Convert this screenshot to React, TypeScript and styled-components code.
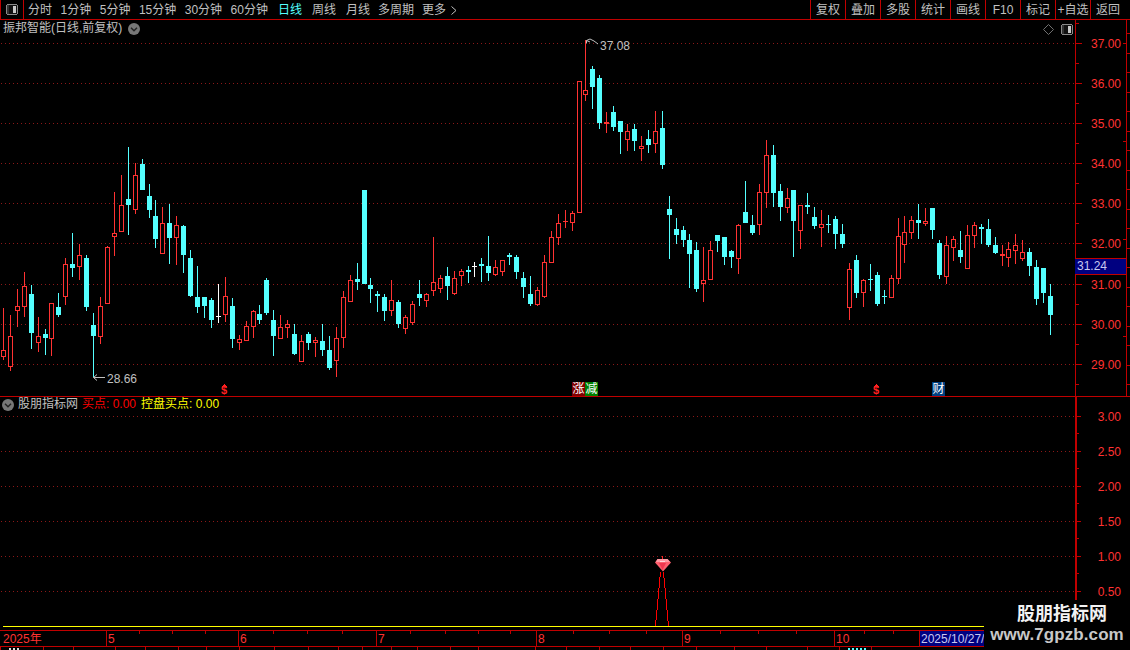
import React from "react";
import styled, { createGlobalStyle } from "styled-components";

const RED = "#c00000";
const LABEL = "#ff3232";
const CYAN = "#54ffff";
const FONT = `"Liberation Sans", "Noto Sans CJK SC", sans-serif`;

const Global = createGlobalStyle`
  html, body { margin: 0; padding: 0; background: #000; }
`;

const Page = styled.div`
  position: relative;
  width: 1130px;
  height: 650px;
  background: #000;
  overflow: hidden;
  display: flex;
  flex-direction: column;
  font: 12px/15px ${FONT};
  color: #c0c0c0;
`;

const Toolbar = styled.div`
  flex: none;
  height: 19px;
  border-bottom: 1px solid ${RED};
  display: flex;
  line-height: 19px;
`;
const IconCell = styled.div`
  width: 22px;
  border-left: 1px solid ${RED};
  border-right: 1px solid ${RED};
  display: flex;
  align-items: center;
  justify-content: center;
`;
const Periods = styled.div`
  display: flex;
  align-items: flex-start;
  padding: 1px 0 0 4px;
`;
const PeriodGroup = styled.div<{ $gap: number; $lead: number }>`
  display: flex;
  gap: ${(p) => p.$gap}px;
  margin-left: ${(p) => p.$lead}px;
`;
const PeriodTab = styled.span<{ $active?: boolean }>`
  display: flex;
  align-items: center;
  gap: 5px;
  white-space: nowrap;
  color: ${(p) => (p.$active ? CYAN : "#c0c0c0")};
`;
const Actions = styled.div`
  margin-left: auto;
  display: flex;
  padding-right: 5px;
`;
const ActionButton = styled.span<{ $last?: boolean }>`
  width: 34px;
  padding-top: 1px;
  border-left: 1px solid ${RED};
  text-align: center;
  white-space: nowrap;
`;

const Pane = styled.div<{ $height: number; $rule?: boolean }>`
  flex: none;
  height: ${(p) => p.$height}px;
  display: flex;
  box-sizing: border-box;
  border-bottom: ${(p) => (p.$rule ? `1px solid ${RED}` : "none")};
`;
const Plot = styled.div`
  position: relative;
  width: 1075px;
  flex: none;
`;
const AxisColumn = styled.div`
  position: relative;
  flex: 1;
`;
const Drawing = styled.svg`
  display: block;
  flex: none;
  font-family: ${FONT};
  font-size: 12px;
`;
const PaneHeader = styled.div<{ $left: number; $top: number }>`
  position: absolute;
  left: ${(p) => p.$left}px;
  top: ${(p) => p.$top}px;
  display: flex;
  align-items: center;
  white-space: nowrap;
`;
const Legend = styled.span<{ $color: string; $lead: number }>`
  display: flex;
  color: ${(p) => p.$color};
  margin-left: ${(p) => p.$lead}px;
`;
const CornerTools = styled.div`
  position: absolute;
  right: 2px;
  top: 4px;
  display: flex;
  align-items: center;
  gap: 7px;
`;
const Badge = styled.span<{ $bg: string; $left: number }>`
  position: absolute;
  left: ${(p) => p.$left}px;
  top: 362px;
  width: 13px;
  height: 14px;
  line-height: 14px;
  text-align: center;
  color: #fff;
  background: ${(p) => p.$bg};
`;
const PriceTag = styled.div`
  position: absolute;
  left: 0;
  top: 238px;
  width: 51px;
  height: 17px;
  box-sizing: border-box;
  border-top: 1px solid ${RED};
  border-bottom: 1px solid ${RED};
  background: #000080;
  color: #c8c8f0;
  line-height: 15px;
  padding-left: 2px;
`;
const TabStrip = styled.div`
  flex: none;
  height: 3px;
  overflow: hidden;
  display: flex;
`;
const TabCell = styled.div<{ $width: number }>`
  flex: none;
  width: ${(p) => p.$width}px;
  height: 3px;
  box-sizing: border-box;
  border-left: 1px solid ${RED};
`;
const TabSliver = styled.div<{ $color: string; $lead: number; $width: number }>`
  margin: 1px 0 0 ${(p) => p.$lead}px;
  width: ${(p) => p.$width}px;
  height: 2px;
  background: repeating-linear-gradient(
    90deg,
    ${(p) => p.$color} 0 2px,
    transparent 2px 4px
  );
`;
const Watermark = styled.div`
  position: absolute;
  left: 984px;
  top: 600px;
  width: 146px;
  height: 50px;
  background: #000;
  display: flex;
  flex-direction: column;
  align-items: center;
  color: #fff;
`;
const WatermarkTitle = styled.div`
  margin: 3px 0 0 10px;
  font-size: 18px;
  line-height: 22px;
  font-weight: 700;
  color: #f2f2f2;
`;
const WatermarkUrl = styled.div`
  font-size: 17px;
  line-height: 20px;
  font-weight: 700;
  letter-spacing: 0.08px;
  color: #c8c8c8;
`;

const ToggleIcon = () => (
  <svg width="12" height="11" viewBox="0 0 12 11" shapeRendering="crispEdges">
    <rect x="0.5" y="0.5" width="11" height="10" rx="2" fill="#111" stroke="#8a8a8a" />
    <rect x="1" y="1" width="2" height="9" fill="#333" />
    <rect x="7" y="2" width="3" height="7" fill="#c8c8c8" />
  </svg>
);
const DiamondIcon = () => (
  <svg width="11" height="11" viewBox="0 0 11 11">
    <path d="M5.5 0.5 10.5 5.5 5.5 10.5 0.5 5.5Z" fill="none" stroke="#707070" />
  </svg>
);
const ChevronBadge = () => (
  <svg width="12" height="12" viewBox="0 0 12 12">
    <circle cx="6" cy="6" r="6" fill="#777" />
    <path d="M3 4.8 6 7.8 9 4.8" fill="none" stroke="#222" strokeWidth="1.4" />
  </svg>
);
const MoreChevron = () => (
  <svg width="6" height="9" viewBox="0 0 6 9">
    <path d="M0.5 0.5 5 4.5 0.5 8.5" fill="none" stroke="#c0c0c0" />
  </svg>
);

// x index is implicit: [wickTop, wickBottom, bodyTop, bodyBottom, colour]
type Candle = [number, number, number, number, "r" | "c" | "w"];
const candles: Candle[] = [
  [308,360,350,357,"r"],[315,371,336,367,"r"],[289,327,306,311,"r"],[272,317,286,307,"r"],[285,349,294,333,"c"],
  [317,352,336,343,"r"],[329,355,334,338,"c"],[303,356,303,339,"r"],[293,317,307,315,"c"],[258,305,264,297,"r"],
  [233,277,264,268,"c"],[244,280,255,267,"r"],[255,311,258,307,"c"],[313,377,325,336,"c"],[297,344,306,337,"r"],
  [246,304,247,304,"r"],[192,256,233,237,"r"],[175,232,205,232,"r"],[147,235,199,205,"c"],[163,214,175,210,"r"],
  [159,190,164,190,"c"],[184,218,196,210,"c"],[200,248,216,239,"c"],[207,254,223,254,"r"],[204,264,223,238,"c"],
  [216,265,225,238,"r"],[225,273,226,255,"c"],[250,297,258,296,"c"],[266,313,297,307,"c"],[297,318,297,306,"c"],
  [298,328,300,320,"c"],[284,323,316,316,"w"],[277,322,296,315,"r"],[298,348,306,339,"c"],[335,350,339,343,"r"],
  [321,341,326,341,"r"],[310,338,311,327,"r"],[305,324,314,320,"c"],[278,315,280,313,"c"],[310,356,320,336,"c"],
  [315,339,327,339,"r"],[320,338,324,328,"r"],[324,355,334,354,"c"],[335,362,341,362,"r"],[332,350,334,343,"c"],
  [337,357,340,343,"r"],[324,356,341,350,"c"],[336,370,350,368,"c"],[327,377,338,361,"r"],[291,348,297,338,"r"],
  [275,302,280,302,"r"],[263,290,279,282,"c"],[190,284,190,284,"c"],[278,303,285,289,"c"],[291,312,294,296,"c"],
  [294,321,297,311,"c"],[280,316,300,311,"r"],[300,328,302,324,"c"],[315,334,317,329,"r"],[301,325,304,323,"r"],
  [280,306,294,298,"c"],[293,307,294,301,"r"],[237,296,282,291,"r"],[275,293,278,289,"r"],[267,300,276,286,"c"],
  [271,295,278,294,"r"],[269,286,271,276,"r"],[266,283,270,272,"c"],[262,277,266,266,"w"],[258,282,264,266,"c"],
  [236,281,266,273,"c"],[260,276,267,275,"r"],[260,276,260,272,"r"],[253,265,255,257,"c"],[255,279,257,272,"c"],
  [272,298,278,287,"c"],[276,306,294,304,"c"],[287,306,290,305,"r"],[255,298,262,297,"r"],[231,263,237,263,"r"],
  [214,245,223,238,"r"],[210,228,221,221,"r"],[211,231,213,223,"r"],[81,213,81,213,"r"],[40,101,90,95,"r"],
  [66,109,69,87,"c"],[75,129,78,123,"c"],[112,133,122,124,"r"],[106,131,112,127,"c"],[121,154,121,132,"c"],
  [124,151,131,140,"r"],[124,151,129,141,"c"],[136,161,146,149,"r"],[130,153,139,145,"c"],[111,153,131,144,"r"],
  [111,169,128,165,"c"],[196,259,209,215,"c"],[218,244,229,235,"c"],[226,247,230,240,"c"],[234,288,240,254,"c"],
  [242,292,250,289,"c"],[247,302,280,284,"r"],[241,280,250,280,"r"],[235,252,235,241,"c"],[237,265,237,257,"c"],
  [250,268,251,257,"c"],[224,274,225,259,"r"],[181,223,212,223,"c"],[215,235,225,233,"c"],[184,235,192,225,"r"],
  [140,208,155,193,"r"],[145,207,155,193,"c"],[184,221,191,207,"c"],[188,213,198,208,"r"],[190,257,190,221,"c"],
  [205,249,205,231,"r"],[193,214,205,207,"c"],[207,229,217,226,"c"],[210,247,224,228,"r"],[215,233,224,224,"c"],
  [216,249,219,234,"c"],[224,248,234,244,"c"],[263,320,269,308,"r"],[255,298,260,293,"c"],[279,307,280,293,"r"],
  [264,291,279,279,"c"],[272,306,275,304,"c"],[290,304,296,296,"c"],[275,298,278,298,"r"],[218,284,236,279,"r"],
  [216,263,232,245,"r"],[216,239,220,233,"r"],[204,239,220,223,"c"],[208,226,221,224,"r"],[208,239,208,230,"c"],
  [240,279,243,275,"c"],[236,284,245,277,"r"],[236,261,239,248,"r"],[231,263,250,257,"c"],[225,269,235,269,"r"],
  [222,248,225,236,"r"],[224,244,227,229,"c"],[219,247,229,245,"c"],[237,254,245,253,"c"],[245,266,254,256,"r"],
  [242,267,249,258,"r"],[234,264,245,251,"r"],[240,261,252,259,"r"],[248,276,252,266,"c"],[260,305,267,299,"c"],
  [268,303,268,293,"c"],[284,335,296,315,"c"],
];
const COLORS = { r: "#ff3232", c: CYAN, w: "#ffffff" };

const CandleMark = ({ c, i }: { c: Candle; i: number }) => {
  const [wt, wb, bt, bb, k] = c;
  const x = Math.floor(3.4 + 6.935 * i);
  const col = COLORS[k];
  const h = Math.max(bb - bt, 1);
  const hollow = k === "r" && h > 2;
  return (
    <g>
      <rect x={x} y={wt} width={1} height={wb - wt} fill={col} />
      {hollow ? (
        <rect x={x - 1.5} y={bt + 0.5} width={4} height={h - 1} fill="#000" stroke={col} />
      ) : (
        <rect x={x - 2} y={bt} width={5} height={h} fill={col} />
      )}
    </g>
  );
};

const Grid = ({ ys, width = 1075 }: { ys: number[]; width?: number }) => (
  <g>
    {ys.map((y) => (
      <line key={y} x1={1} x2={width} y1={y + 0.5} y2={y + 0.5} stroke="#8c1818" strokeDasharray="1 3" />
    ))}
  </g>
);

const MoneyMark = ({ x }: { x: number }) => (
  <g>
    <path d={`M${x} 384 ${x + 3} 387 ${x - 3} 387Z`} fill="#ff2020" />
    <text x={x} y={394} textAnchor="middle" fill="#ff2020" fontWeight={700} fontSize={11}>
      $
    </text>
  </g>
);

const PRICE_TICKS: [number, string][] = [
  [43, "37.00"],[83, "36.00"],[123, "35.00"],[163, "34.00"],[203, "33.00"],
  [243, "32.00"],[284, "31.00"],[324, "30.00"],[364, "29.00"],
];
const SUB_TICKS: [number, string][] = [
  [416, "3.00"],[451, "2.50"],[486, "2.00"],[521, "1.50"],[556, "1.00"],[591, "0.50"],
];
const PERIOD_A = ["分时", "1分钟", "5分钟", "15分钟", "30分钟", "60分钟"];
const ACTIONS = ["复权", "叠加", "多股", "统计", "画线", "F10", "标记", "+自选", "返回"];
const MONTHS: [number, string][] = [[106, "5"],[238, "6"],[376, "7"],[536, "8"],[682, "9"],[834, "10"]];
const MINOR_X = [139,172,205,273,307,342,410,445,478,510,573,609,646,720,758,796,864,893];
const TAB_STOPS = [0,43,73,115,145,178,206,239,274,308,338,362,391,417,450,478,535,566,599,630,663,696,734,766,807,839,871];

const RightTicks = () => (
  <g fill={RED}>
    {Array.from({ length: 20 }, (_, i) => (
      <rect key={i} x={1127} y={33 + Math.round(i * 19.5)} width={3} height={1} />
    ))}
    {[43, 141, 239, 336].map((y) => (
      <rect key={y} x={1123} y={y} width={3} height={1} />
    ))}
  </g>
);

export default function App() {
  const minorMain = PRICE_TICKS.map(([y]) => y + 20).concat([23]);
  const minorSub = SUB_TICKS.map(([y]) => y + 17);
  return (
    <Page>
      <Global />
      <Toolbar>
        <IconCell>
          <ToggleIcon />
        </IconCell>
        <Periods>
          <PeriodGroup $gap={8.5} $lead={0}>
            {PERIOD_A.map((t) => (
              <PeriodTab key={t}>{t}</PeriodTab>
            ))}
          </PeriodGroup>
          <PeriodGroup $gap={10} $lead={10}>
            <PeriodTab $active>日线</PeriodTab>
            <PeriodTab>周线</PeriodTab>
            <PeriodTab>月线</PeriodTab>
          </PeriodGroup>
          <PeriodGroup $gap={8} $lead={8}>
            <PeriodTab>多周期</PeriodTab>
            <PeriodTab>
              更多
              <MoreChevron />
            </PeriodTab>
          </PeriodGroup>
        </Periods>
        <Actions>
          {ACTIONS.map((t) => (
            <ActionButton key={t}>{t}</ActionButton>
          ))}
        </Actions>
      </Toolbar>

      <Pane $height={377} $rule>
        <Plot>
          <Drawing width={1075} height={376} viewBox="0 20 1075 376" shapeRendering="crispEdges">
            <Grid ys={PRICE_TICKS.map(([y]) => y)} />
            {candles.map((c, i) => (
              <CandleMark key={i} c={c} i={i} />
            ))}
            <path d="M93.5 377.5H105M93.5 377.5 97 374.5M93.5 377.5 97 380.5" stroke="#c0c0c0" fill="none" shapeRendering="auto" />
            <text x={107} y={383} fill="#c0c0c0">28.66</text>
            <path d="M586.5 40.5 590 39 594 41 598 44M586.5 40.5V43.5M586.5 40.5 590 42" stroke="#c0c0c0" fill="none" shapeRendering="auto" />
            <text x={600} y={50} fill="#c0c0c0">37.08</text>
            <MoneyMark x={224} />
            <MoneyMark x={876} />
          </Drawing>
          <PaneHeader $left={3} $top={1}>
            振邦智能(日线,前复权)
            <Legend $color="#c0c0c0" $lead={6}>
              <ChevronBadge />
            </Legend>
          </PaneHeader>
          <CornerTools>
            <DiamondIcon />
            <ToggleIcon />
          </CornerTools>
          <Badge $bg="#800000" $left={572}>涨</Badge>
          <Badge $bg="#008000" $left={585}>减</Badge>
          <Badge $bg="#004080" $left={932}>财</Badge>
        </Plot>
        <AxisColumn>
          <Drawing width={55} height={376} viewBox="1075 20 55 376">
            <g shapeRendering="crispEdges">
              <rect x={1075} y={20} width={1} height={376} fill={RED} />
              <rect x={1126} y={20} width={1} height={376} fill={RED} />
              {PRICE_TICKS.map(([y]) => (
                <rect key={y} x={1076} y={y} width={6} height={1} fill={RED} />
              ))}
              {minorMain.map((y) => (
                <rect key={y} x={1076} y={y} width={3} height={1} fill={RED} />
              ))}
              <RightTicks />
            </g>
            {PRICE_TICKS.map(([y, t]) => (
              <text key={t} x={1121} y={y + 5} textAnchor="end" fill={LABEL}>
                {t}
              </text>
            ))}
          </Drawing>
          <PriceTag>31.24</PriceTag>
        </AxisColumn>
      </Pane>

      <Pane $height={233}>
        <Plot>
          <Drawing width={1075} height={233} viewBox="0 397 1075 233" shapeRendering="crispEdges">
            <Grid ys={SUB_TICKS.map(([y]) => y)} />
            <polyline points="655.5,626 660.5,572" fill="none" stroke="#ff0000" />
            <polyline points="668.5,626 663.5,572" fill="none" stroke="#ff0000" />
            <rect x={662} y={556} width={1} height={4} fill="#ff2020" />
            <g shapeRendering="auto">
              <path d="M657.5 559 667.5 559 671 562.5 663 571.5 655 562.5Z" fill="#ff5f6e" />
              <path d="M657.5 559 667.5 559 670 562 656 562Z" fill="#ff9aa4" />
              <path d="M659 563 666 563 662.5 570Z" fill="#f03850" />
              <path d="M660 561.5h5" stroke="#ffd8dc" />
            </g>
            <rect x={3} y={626} width={1072} height={1} fill="#ffff00" />
          </Drawing>
          <PaneHeader $left={2} $top={0}>
            <ChevronBadge />
            <Legend $color="#c0c0c0" $lead={4}>股朋指标网</Legend>
            <Legend $color="#ff0000" $lead={4}>买点: 0.00</Legend>
            <Legend $color="#ffff00" $lead={5}>控盘买点: 0.00</Legend>
          </PaneHeader>
        </Plot>
        <AxisColumn>
          <Drawing width={55} height={233} viewBox="1075 397 55 233">
            <g shapeRendering="crispEdges">
              <rect x={1075} y={397} width={2} height={233} fill={RED} />
              {SUB_TICKS.map(([y]) => (
                <rect key={y} x={1077} y={y} width={4} height={1} fill={RED} />
              ))}
              {minorSub.map((y) => (
                <rect key={y} x={1077} y={y} width={2} height={1} fill={RED} />
              ))}
            </g>
            {SUB_TICKS.map(([y, t]) => (
              <text key={t} x={1121} y={y + 5} textAnchor="end" fill={LABEL}>
                {t}
              </text>
            ))}
          </Drawing>
        </AxisColumn>
      </Pane>

      <Drawing width={1130} height={17} viewBox="0 630 1130 17">
        <g shapeRendering="crispEdges">
          <rect x={919} y={631} width={66} height={15} fill="#000080" />
          <rect x={0} y={630} width={1130} height={1} fill={RED} />
          <rect x={0} y={646} width={1130} height={1} fill={RED} />
          {MONTHS.map(([x]) => (
            <rect key={x} x={x} y={630} width={1} height={16} fill={RED} />
          ))}
          <rect x={919} y={630} width={1} height={16} fill={RED} />
          {MINOR_X.map((x) => (
            <rect key={x} x={x} y={631} width={1} height={3} fill={RED} />
          ))}
        </g>
        <text x={3} y={643} fill={LABEL}>2025年</text>
        {MONTHS.map(([x, t]) => (
          <text key={t} x={x + 2} y={643} fill={LABEL}>
            {t}
          </text>
        ))}
        <text x={921} y={643} fill="#c8c8f0">2025/10/27/</text>
      </Drawing>

      <TabStrip>
        {TAB_STOPS.map((x, i) => {
          const next = TAB_STOPS[i + 1] ?? x + 32;
          return (
            <TabCell key={x} $width={next - x}>
              {i === 0 && <TabSliver $color="#e0e0e0" $lead={8} $width={10} />}
              {i === 25 && <TabSliver $color={CYAN} $lead={8} $width={20} />}
            </TabCell>
          );
        })}
      </TabStrip>

      <Watermark>
        <WatermarkTitle>股朋指标网</WatermarkTitle>
        <WatermarkUrl>www.7gpzb.com</WatermarkUrl>
      </Watermark>
    </Page>
  );
}
